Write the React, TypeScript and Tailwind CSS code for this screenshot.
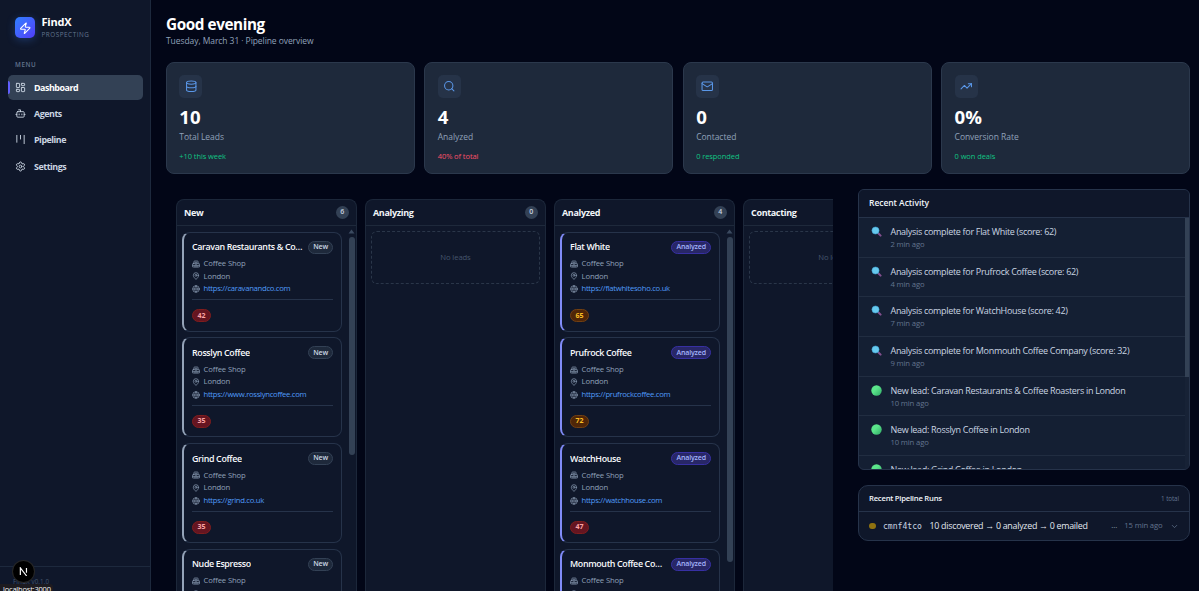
import React from "react";
import {
  Bot,
  ChevronDown,
  Database,
  Globe,
  LayoutDashboard,
  Mail,
  MapPin,
  Search,
  Settings,
  TrendingUp,
  Zap,
} from "lucide-react";

const PipelineIcon = ({ className }: { className?: string }) => (
  <svg className={className} viewBox="0 0 24 24" fill="none" stroke="currentColor" strokeWidth="2" strokeLinecap="round">
    <path d="M4 3v15M12 3v8M20 3v18" />
  </svg>
);

const ShopIcon = ({ className }: { className?: string }) => (
  <svg className={className} viewBox="0 0 24 24" fill="none" stroke="currentColor" strokeWidth="2" strokeLinecap="round" strokeLinejoin="round">
    <path d="M6 10V4.500A1.500 1.500 0 0 1 7.500 3h9A1.500 1.500 0 0 1 18 4.500V10M4 10h16a2 2 0 0 1 2 2v9H2v-9a2 2 0 0 1 2-2zM2 16h20M10 7h4M10 12.500h4M9 21v-4M15 21v-4" />
  </svg>
);

const navItems = [
  { label: "Dashboard", icon: LayoutDashboard, active: true },
  { label: "Agents", icon: Bot, active: false },
  { label: "Pipeline", icon: PipelineIcon, active: false },
  { label: "Settings", icon: Settings, active: false },
];

const stats = [
  { label: "Total Leads", value: "10", change: "+10 this week", icon: Database, positive: true },
  { label: "Analyzed", value: "4", change: "40% of total", icon: Search, positive: false },
  { label: "Contacted", value: "0", change: "0 responded", icon: Mail, positive: true },
  { label: "Conversion Rate", value: "0%", change: "0 won deals", icon: TrendingUp, positive: true },
];

type Lead = { name: string; url: string; score: number };

type Column = { title: string; count: number; thumb: string; leads: Lead[] };

const columns: Column[] = [
  {
    title: "New",
    count: 6,
    thumb: "h-[218px]",
    leads: [
      { name: "Caravan Restaurants & Coffee Roasters", url: "https://caravanandco.com", score: 42 },
      { name: "Rosslyn Coffee", url: "https://www.rosslyncoffee.com", score: 35 },
      { name: "Grind Coffee", url: "https://grind.co.uk", score: 35 },
      { name: "Nude Espresso", url: "https://nudeespresso.com", score: 38 },
    ],
  },
  { title: "Analyzing", count: 0, thumb: "", leads: [] },
  {
    title: "Analyzed",
    count: 4,
    thumb: "h-[325px]",
    leads: [
      { name: "Flat White", url: "https://flatwhitesoho.co.uk", score: 65 },
      { name: "Prufrock Coffee", url: "https://prufrockcoffee.com", score: 72 },
      { name: "WatchHouse", url: "https://watchhouse.com", score: 47 },
      { name: "Monmouth Coffee Company", url: "https://monmouthcoffee.co.uk", score: 32 },
    ],
  },
  { title: "Contacting", count: 0, thumb: "", leads: [] },
];

const activity = [
  { type: "analysis", text: "Analysis complete for Flat White (score: 62)", time: "2 min ago" },
  { type: "analysis", text: "Analysis complete for Prufrock Coffee (score: 62)", time: "4 min ago" },
  { type: "analysis", text: "Analysis complete for WatchHouse (score: 42)", time: "7 min ago" },
  { type: "analysis", text: "Analysis complete for Monmouth Coffee Company (score: 32)", time: "9 min ago" },
  { type: "lead", text: "New lead: Caravan Restaurants & Coffee Roasters in London", time: "10 min ago" },
  { type: "lead", text: "New lead: Rosslyn Coffee in London", time: "10 min ago" },
  { type: "lead", text: "New lead: Grind Coffee in London", time: "10 min ago" },
];

function Sidebar() {
  return (
    <aside className="relative flex h-full w-[151px] shrink-0 flex-col border-r border-slate-800 bg-[#0f172a]">
      <div className="flex items-center gap-[6.500px] pl-[15px] pt-[15.500px]">
        <div className="flex h-[21px] w-[20px] items-center justify-center rounded-[5px] bg-gradient-to-br from-blue-500 to-indigo-600 shadow-[0_2px_8px_rgba(59,130,246,0.3)]">
          <Zap className="h-[12.500px] w-[12.500px] text-white" />
        </div>
        <div className="flex flex-col">
          <span className="text-[11px] font-bold leading-[11px] tracking-[-0.22px] text-white">FindX</span>
          <span className="mt-[2.500px] text-[6.3px] leading-[11px] tracking-[0.55px] text-slate-500">PROSPECTING</span>
        </div>
      </div>

      <p className="mt-[19px] pl-[15px] text-[6.3px] font-semibold leading-[12px] tracking-[0.6px] text-slate-500">MENU</p>
      <nav className="mt-[3.500px] flex flex-col gap-[1.400px] pl-[8px] pr-[7px]">
        {navItems.map(({ label, icon: Icon, active }) => (
          <a
            key={label}
            className={
              active
                ? "relative flex h-[25px] items-center gap-[8px] rounded-[5px] bg-[#334155] pl-[7px] text-white"
                : "relative flex h-[25px] items-center gap-[8px] rounded-[5px] pl-[7px] text-slate-300"
            }
          >
            {active && <span className="absolute left-[-0.5px] top-[6px] h-[13px] w-[2px] rounded-r bg-indigo-500" />}
            <Icon className="h-[11px] w-[11px] text-slate-300" />
            <span className="text-[8.9px] font-bold leading-[13px] tracking-[-0.45px]">{label}</span>
          </a>
        ))}
      </nav>

      <div className="mt-auto h-[25px] border-t border-slate-800 pl-[13px] pt-[10px]">
        <p className="text-[6.2px] leading-[9px] tracking-[0.15px] text-slate-600">FindX v0.1.0</p>
      </div>

      <div className="absolute left-[13px] top-[561px] flex h-[21px] w-[21px] items-center justify-center rounded-full bg-black shadow-[0_0_0_1px_#262626]">
        <svg className="h-[9px] w-[9px]" viewBox="0 0 10 10" fill="none" stroke="white" strokeWidth="1.3">
          <path d="M1.500 9V1L8.500 10M8.300 1v5.500" />
        </svg>
      </div>
      <div className="absolute bottom-0 left-0 h-[7px] w-[53px] overflow-hidden rounded-tr-[3px] bg-[#1d1b20] pl-[3px]">
        <p className="text-[7.500px] leading-[11px] tracking-[-0.2px] text-gray-100">localhost:3000</p>
      </div>
    </aside>
  );
}

function StatCard({ stat }: { stat: (typeof stats)[number] }) {
  const Icon = stat.icon;
  return (
    <div className="h-[112px] rounded-[8px] border border-[#2b384c] bg-[#1e293b] pl-[12.300px] pt-[12px]">
      <div className="flex h-[23px] w-[23px] items-center justify-center rounded-[5px] bg-[#263348]">
        <Icon className="h-[12.500px] w-[12.500px] text-[#5a97e8]" />
      </div>
      <p className="mt-[8px] text-[18.600px] font-bold leading-[21px] text-white">{stat.value}</p>
      <p className="mt-[3px] text-[8.500px] leading-[13px] tracking-[-0.04px] text-slate-400">{stat.label}</p>
      <p
        className={
          stat.positive
            ? "mt-[7.500px] text-[7.500px] font-medium leading-[11px] tracking-[-0.08px] text-[#10c583]"
            : "mt-[7.500px] text-[7.500px] font-medium leading-[11px] tracking-[-0.08px] text-[#fa5068]"
        }
      >
        {stat.change}
      </p>
    </div>
  );
}

function LeadCard({ lead, status }: { lead: Lead; status: string }) {
  const analyzed = status === "Analyzed";
  return (
    <div
      className={
        analyzed
          ? "h-[100px] shrink-0 rounded-[8px] border border-l-2 border-[#26334a] border-l-[#818cf8] bg-[#0f172a] pl-[8px] pr-[8px] pt-[8px]"
          : "h-[100px] shrink-0 rounded-[8px] border border-l-2 border-[#26334a] border-l-[#94a3b8] bg-[#0f172a] pl-[8px] pr-[8px] pt-[8px]"
      }
    >
      <div className="flex h-[13px] items-center justify-between gap-[3px]">
        <h4 className="truncate text-[8.9px] font-semibold leading-[12px] tracking-[-0.35px] text-slate-50">{lead.name}</h4>
        <span
          className={
            analyzed
              ? "flex h-[13px] shrink-0 items-center rounded-full border border-[#3730a3] bg-[#282767] px-[4px] text-[7px] font-semibold tracking-[-0.12px] text-[#a5b4fc]"
              : "flex h-[13px] shrink-0 items-center rounded-full border border-[#334155] bg-[#1e293b] px-[4px] text-[7px] font-semibold tracking-[-0.12px] text-[#cbd5e1]"
          }
        >
          {status}
        </span>
      </div>
      <div className="mt-[4px] flex flex-col text-[7.700px] tracking-[-0.12px] text-slate-400">
        <div className="flex h-[12.600px] items-center gap-[3.500px]">
          <ShopIcon className="h-[8px] w-[8px]" />
          <span>Coffee Shop</span>
        </div>
        <div className="flex h-[12.600px] items-center gap-[3.500px]">
          <MapPin className="h-[8px] w-[8px]" />
          <span>London</span>
        </div>
        <div className="flex h-[12.600px] items-center gap-[3.500px]">
          <Globe className="h-[8px] w-[8px]" />
          <span className="tracking-[-0.29px] text-[#4f9bf8]">{lead.url}</span>
        </div>
      </div>
      <div className="mt-[4px] border-t border-[#26334a] pt-[9px]">
        <span
          className={
            lead.score >= 60
              ? "flex h-[13px] w-[19px] items-center justify-center rounded-full border border-[#713f12] bg-[#4f2608] text-[7px] font-bold text-[#fbbf24]"
              : "flex h-[13px] w-[19px] items-center justify-center rounded-full border border-[#7f1d1d] bg-[#651521] text-[7px] font-bold text-[#fca5a5]"
          }
        >
          {lead.score}
        </span>
      </div>
    </div>
  );
}

function KanbanColumn({ column }: { column: Column }) {
  return (
    <section className="flex w-[181px] shrink-0 flex-col overflow-hidden rounded-t-[8px] border border-b-0 border-[#1c273a] bg-[#0f172a]">
      <header className="flex h-[26px] shrink-0 items-center justify-between border-b border-[#1e293b] pl-[7px] pr-[7px]">
        <h3 className="text-[9px] font-bold leading-[12px] tracking-[-0.34px] text-slate-100">{column.title}</h3>
        <span className="flex h-[13.500px] w-[13.500px] items-center justify-center rounded-full bg-[#334155] text-[7px] font-semibold text-slate-300">
          {column.count}
        </span>
      </header>
      {column.leads.length === 0 ? (
        <div className="mx-[5px] mt-[5px] flex h-[53px] items-center justify-center rounded-[6px] border border-dashed border-[#2a3649] text-[7.700px] tracking-[-0.12px] text-slate-600">
          No leads
        </div>
      ) : (
        <div className="flex min-h-0 flex-1 justify-between">
          <div className="ml-[5px] mt-[5.500px] flex w-[160px] flex-col gap-[5.800px]">
            {column.leads.map((lead) => (
              <LeadCard key={lead.name} lead={lead} status={column.title} />
            ))}
          </div>
          <div className="flex w-[9px] flex-col items-center pt-[3px]">
            <svg className="h-[5px] w-[7px]" viewBox="0 0 7 5">
              <path d="M3.500 0.500L6.500 4.500H0.500z" fill="#3b4a60" />
            </svg>
            <div className={`mt-[3px] w-[6px] shrink-0 rounded-full bg-[#334155] ${column.thumb}`} />
          </div>
        </div>
      )}
    </section>
  );
}

function ActivityIcon({ type }: { type: string }) {
  if (type === "lead") {
    return (
      <svg className="mt-[1px] h-[11px] w-[11px] shrink-0" viewBox="0 0 11 11">
        <defs>
          <linearGradient id="leadDot" x1="0" y1="0" x2="1" y2="1">
            <stop offset="0.4" stopColor="#5be58b" />
            <stop offset="1" stopColor="#2fa866" />
          </linearGradient>
        </defs>
        <circle cx="5.500" cy="5.500" r="5.200" fill="url(#leadDot)" />
      </svg>
    );
  }
  return (
    <svg className="mt-[1px] h-[11px] w-[11px] shrink-0" viewBox="0 0 11 11">
      <path d="M7.500 7.500l2.100 2.100" stroke="#84508f" strokeWidth="2" strokeLinecap="round" />
      <circle cx="4.500" cy="4.500" r="3.600" fill="#66c9ee" stroke="#3f9fd0" strokeWidth="0.500" />
    </svg>
  );
}

function RecentActivity() {
  return (
    <section className="flex h-[281px] flex-col overflow-hidden rounded-[6px] border border-[#26334a] bg-[#141f33]">
      <h3 className="flex h-[28px] shrink-0 items-center border-b border-[#26334a] bg-[#0f172a] pl-[10px] text-[8.500px] font-semibold tracking-[-0.05px] text-slate-100">
        Recent Activity
      </h3>
      <div className="flex min-h-0 flex-1">
        <ul className="min-w-0 flex-1">
          {activity.map((item) => (
            <li key={item.text} className="flex h-[39.650px] gap-[9px] border-b border-[#212d41] pl-[11.500px] pt-[7px]">
              <ActivityIcon type={item.type} />
              <div>
                <p className="whitespace-nowrap text-[9px] leading-[13px] tracking-[-0.31px] text-slate-300">{item.text}</p>
                <p className="text-[7.700px] leading-[13px] tracking-[-0.15px] text-slate-500">{item.time}</p>
              </div>
            </li>
          ))}
        </ul>
        <div className="w-[4px] bg-[#172236]">
          <div className="h-[159px] bg-[#334155]" />
        </div>
      </div>
    </section>
  );
}

function PipelineRuns() {
  return (
    <section className="mt-[15px] flex h-[56px] flex-col rounded-[10px] border border-[#26334a] bg-[#0f172a]">
      <div className="flex h-[26px] items-center justify-between border-b border-[#26334a] pl-[10px] pr-[10px]">
        <h3 className="text-[7.700px] font-semibold tracking-[-0.24px] text-slate-100">Recent Pipeline Runs</h3>
        <span className="text-[6.300px] tracking-[-0.1px] text-slate-500">1 total</span>
      </div>
      <div className="flex flex-1 items-center pl-[10px] pr-[10px]">
        <span className="h-[6.500px] w-[6.500px] shrink-0 rounded-full bg-[#8f7210]" />
        <code className="ml-[7.500px] font-['DejaVu_Sans_Mono',monospace] text-[8.100px] text-slate-300">cmnf4tco</code>
        <span className="ml-[7.500px] whitespace-nowrap text-[8.900px] tracking-[-0.28px] text-slate-200">
          10 discovered → 0 analyzed → 0 emailed
        </span>
        <span className="ml-auto text-[7.700px] text-slate-400">...</span>
        <span className="ml-[7px] text-[7.700px] tracking-[-0.15px] text-slate-500">15 min ago</span>
        <ChevronDown className="ml-[7.500px] h-[9px] w-[9px] text-slate-500" />
      </div>
    </section>
  );
}

export default function App() {
  return (
    <div className="flex h-[591px] w-[1199px] overflow-hidden bg-[#020617] font-['Open_Sans',sans-serif]">
      <Sidebar />
      <main className="flex min-w-0 flex-1 flex-col pl-[15px] pr-[9px]">
        <header className="pt-[13px]">
          <h1 className="text-[15.300px] font-bold leading-[22px] tracking-[-0.42px] text-white">Good evening</h1>
          <p className="text-[8.500px] leading-[12px] tracking-[-0.07px] text-slate-400">Tuesday, March 31 · Pipeline overview</p>
        </header>

        <div className="mt-[15px] grid shrink-0 grid-cols-4 gap-[9.700px]">
          {stats.map((stat) => (
            <StatCard key={stat.label} stat={stat} />
          ))}
        </div>

        <div className="mt-[15px] flex min-h-0 flex-1 justify-between">
          <div className="flex w-[667px] gap-[8px] overflow-hidden pl-[10px] pt-[10px]">
            {columns.map((column) => (
              <KanbanColumn key={column.title} column={column} />
            ))}
          </div>
          <div className="w-[332px]">
            <RecentActivity />
            <PipelineRuns />
          </div>
        </div>
      </main>
    </div>
  );
}
